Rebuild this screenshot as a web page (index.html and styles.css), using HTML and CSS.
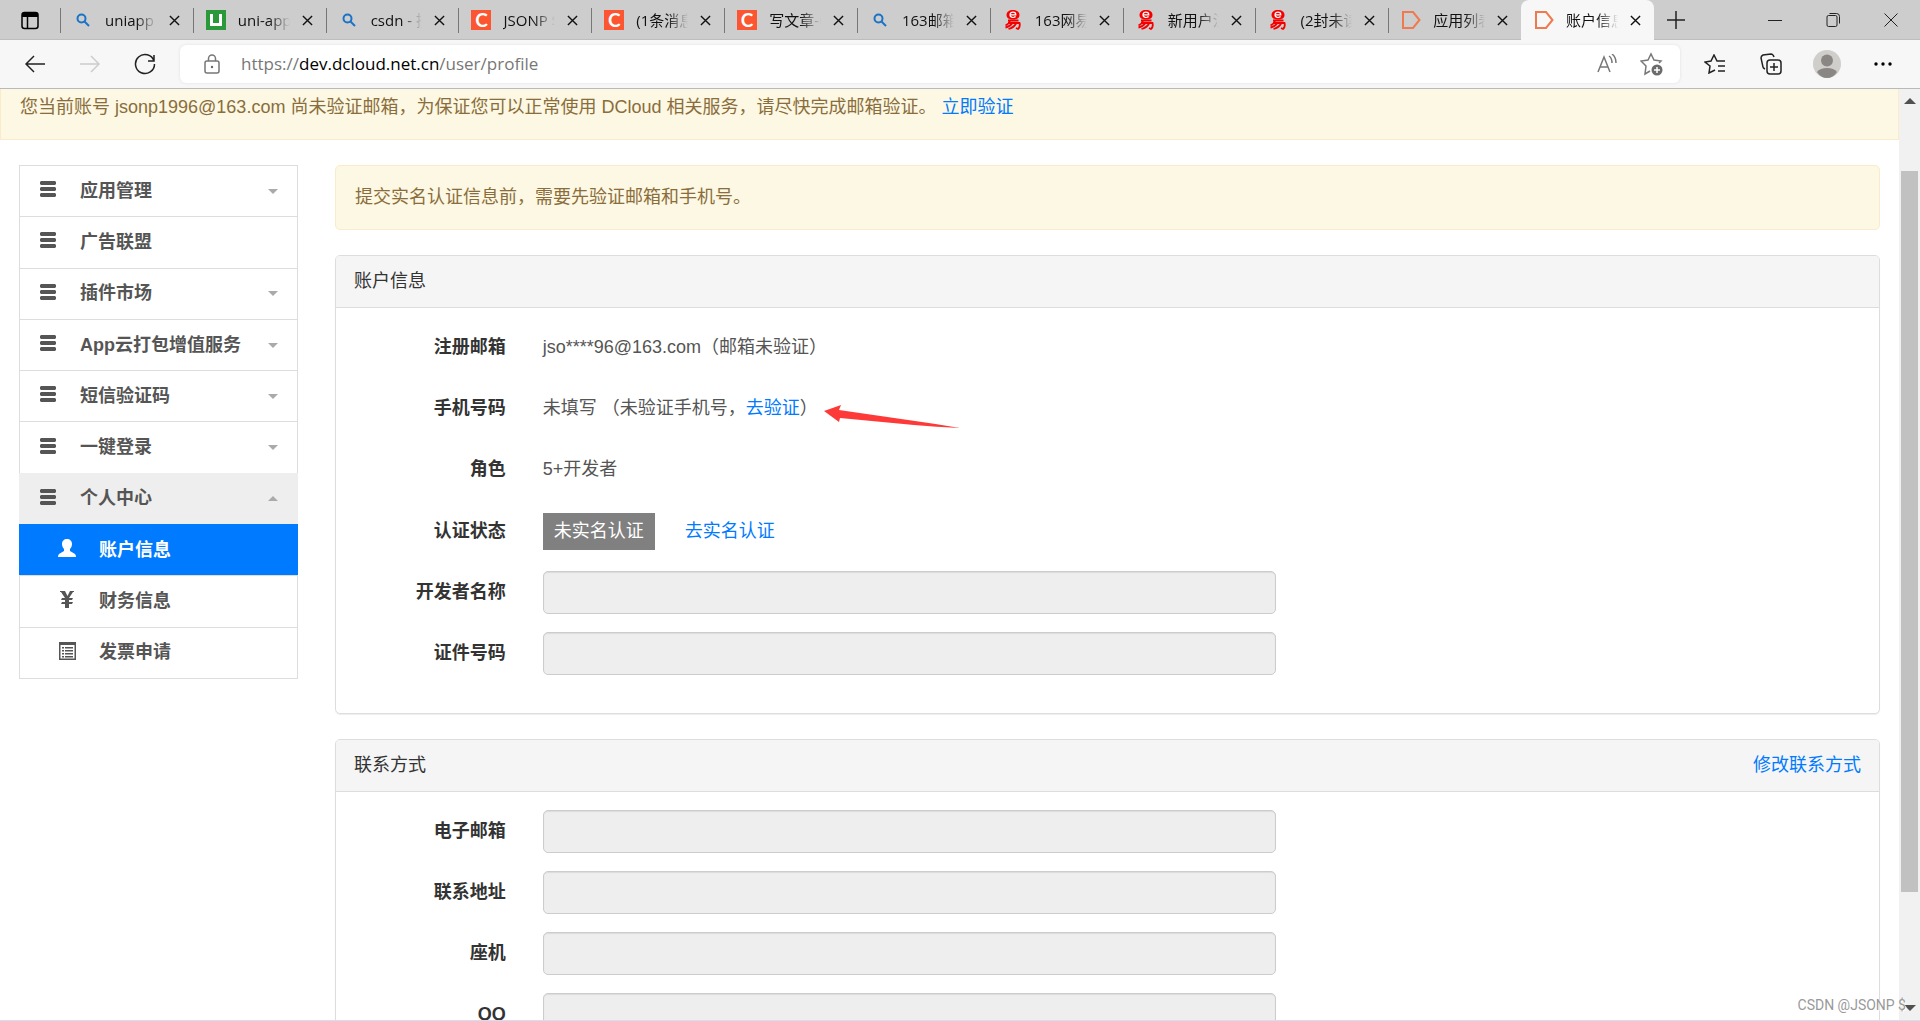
FILE: index.html
```html
<!DOCTYPE html>
<html lang="zh-CN">
<head>
<meta charset="utf-8">
<title>账户信息</title>
<link rel="stylesheet" href="styles.css">
</head>
<body>
<svg class="sprite" aria-hidden="true">
  <symbol id="x" viewBox="0 0 12 12"><path d="M1 1l10 10M11 1L1 11"/></symbol>
  <symbol id="search" viewBox="0 0 14 14"><circle cx="5.500" cy="5.500" r="4"/><path d="M8.500 8.500L13 13"/></symbol>
  <symbol id="bars" viewBox="0 0 16 16"><path d="M1 0h14l1 1v2l-1 1H1L0 3V1zM1 6h14l1 1v2l-1 1H1L0 9V7zM1 12h14l1 1v2l-1 1H1l-1-1v-2z"/></symbol>
  <symbol id="tag" viewBox="0 0 20 20"><path d="M2 2h10l6.500 8-6.500 8H2z"/></symbol>
  <symbol id="yi" viewBox="0 0 20 20"><path d="M10 0C6 0 3.500 2 3.500 5S6 9.500 10 9.500 16.500 8 16.500 5 14 0 10 0z" fill="#f50000"/><path d="M7.200 4.800h5.600C12.800 1.500 7 1.200 7 4.800c0 3.200 4 3.200 5.600 1.700" fill="none" stroke="#fff" stroke-width="1.200"/><path d="M5 10.500h10.500M2.500 15.500Q6 14 7 11M5 13h11.500q1 4-1.500 6l-2-1M9 13.500q-2 3-6.500 4M13 13.500q-2 4-7.500 5.500" fill="none" stroke="#f50000" stroke-width="1.800"/></symbol>
</svg>

<header class="tabbar">
  <button class="icon-btn tab-menu" aria-label="标签操作"><svg width="19" height="19" viewBox="0 0 19 19"><rect x="1" y="1.500" width="16" height="16" rx="2.500" fill="none" stroke="#000" stroke-width="1.500"/><path d="M1 3l2-2h12l2 2v3H1z"/><path d="M6.500 6v11" stroke="#000" stroke-width="1.500"/></svg></button>
  <nav class="tabs">
    <div class="tab"><svg class="fav search"><use href="#search"/></svg><a href="#" class="tab-title">uniapp - 搜索</a><button class="close" aria-label="关闭"><svg><use href="#x"/></svg></button></div>
    <div class="tab"><span class="fav fav-u"><i></i></span><a href="#" class="tab-title">uni-app官网</a><button class="close" aria-label="关闭"><svg><use href="#x"/></svg></button></div>
    <div class="tab"><svg class="fav search"><use href="#search"/></svg><a href="#" class="tab-title">csdn - 搜索</a><button class="close" aria-label="关闭"><svg><use href="#x"/></svg></button></div>
    <div class="tab"><span class="fav fav-c">C</span><a href="#" class="tab-title">JSONP $的博客</a><button class="close" aria-label="关闭"><svg><use href="#x"/></svg></button></div>
    <div class="tab"><span class="fav fav-c">C</span><a href="#" class="tab-title">(1条消息)</a><button class="close" aria-label="关闭"><svg><use href="#x"/></svg></button></div>
    <div class="tab"><span class="fav fav-c">C</span><a href="#" class="tab-title">写文章-CSDN</a><button class="close" aria-label="关闭"><svg><use href="#x"/></svg></button></div>
    <div class="tab"><svg class="fav search"><use href="#search"/></svg><a href="#" class="tab-title">163邮箱 - 搜索</a><button class="close" aria-label="关闭"><svg><use href="#x"/></svg></button></div>
    <div class="tab"><svg class="fav"><use href="#yi"/></svg><a href="#" class="tab-title">163网易邮箱</a><button class="close" aria-label="关闭"><svg><use href="#x"/></svg></button></div>
    <div class="tab"><svg class="fav"><use href="#yi"/></svg><a href="#" class="tab-title">新用户注册</a><button class="close" aria-label="关闭"><svg><use href="#x"/></svg></button></div>
    <div class="tab"><svg class="fav"><use href="#yi"/></svg><a href="#" class="tab-title">(2封未读)</a><button class="close" aria-label="关闭"><svg><use href="#x"/></svg></button></div>
    <div class="tab"><svg class="fav tag"><use href="#tag"/></svg><a href="#" class="tab-title">应用列表</a><button class="close" aria-label="关闭"><svg><use href="#x"/></svg></button></div>
    <div class="tab active"><svg class="fav tag"><use href="#tag"/></svg><a href="#" class="tab-title">账户信息</a><button class="close" aria-label="关闭"><svg><use href="#x"/></svg></button></div>
  </nav>
  <button class="icon-btn new-tab" aria-label="新建标签页"><svg width="18" height="18" viewBox="0 0 18 18"><path class="line" d="M9 0v18M0 9h18"/></svg></button>
  <div class="window-controls">
    <button class="icon-btn" aria-label="最小化"><svg width="14" height="14" viewBox="0 0 14 14"><path class="line thin" d="M0 7.500h14"/></svg></button>
    <button class="icon-btn" aria-label="还原"><svg width="14" height="14" viewBox="0 0 14 14"><path class="line thin" d="M2.500 2.500h7q1.500 0 1.500 1.500v8q0 1.500-1.500 1.500h-7Q1 13.500 1 12V4q0-1.500 1.500-1.500zM3.500.5h7q3 0 3 3v7"/></svg></button>
    <button class="icon-btn" aria-label="关闭窗口"><svg width="14" height="14" viewBox="0 0 14 14"><path class="line thin" d="M.5.5l13 13M13.500.5l-13 13"/></svg></button>
  </div>
</header>

<div class="toolbar">
  <div class="nav-buttons">
    <button class="icon-btn" aria-label="返回"><svg width="20" height="20" viewBox="0 0 20 20"><path class="line" d="M20 10H1M9 2l-8 8 8 8"/></svg></button>
    <button class="icon-btn faded" aria-label="前进"><svg width="20" height="20" viewBox="0 0 20 20"><path class="line" d="M0 10h19M11 2l8 8-8 8"/></svg></button>
    <button class="icon-btn" aria-label="刷新"><svg width="22" height="22" viewBox="0 0 22 22"><path class="line" d="M20 8a9.500 9.500 0 1 0 .5 3M20 2v6h-6"/></svg></button>
  </div>
  <div class="address">
    <svg class="lock" width="16" height="20" viewBox="0 0 16 20"><path class="line" d="M3 7h10q2 0 2 2v8q0 2-2 2H3q-2 0-2-2V9q0-2 2-2zM4.500 7V4.500a3.500 3.500 0 0 1 7 0V7"/><circle cx="8" cy="13" r="1.200" fill="#666"/></svg>
    <div class="url" role="textbox" contenteditable="true" spellcheck="false" aria-label="地址">https://<b>dev.dcloud.net.cn</b>/user/profile</div>
    <button class="icon-btn grey" aria-label="大声朗读"><svg width="20" height="20" viewBox="0 0 20 20"><path class="line" d="M1 18L7 3l6 15M3 13h8M12 2q3 2 3 7M15 0q4 3 4 9"/></svg></button>
    <button class="icon-btn grey" aria-label="收藏"><svg width="24" height="24" viewBox="0 0 24 24"><path class="line" d="M10 19l-5 3 1-8-5-5 7-1 3-6 3 6 7 1-2 2"/><circle cx="17" cy="18" r="5.500" fill="#6b6b6b"/><path d="M17 15v6M14 18h6" stroke="#fff" stroke-width="1.500"/></svg></button>
  </div>
  <div class="tools">
    <button class="icon-btn" aria-label="收藏夹"><svg width="22" height="20" viewBox="0 0 22 20"><path class="line" d="M11 16l-6 3 1-7-5-4 6-1 3-6 3 6h8M14 12h7M14 17h7"/></svg></button>
    <button class="icon-btn" aria-label="集锦"><svg width="22" height="22" viewBox="0 0 22 22"><path class="line" d="M10 7h8q3 0 3 3v8q0 3-3 3h-8q-3 0-3-3v-8q0-3 3-3zM14 10v8M10 14h8M5 16q-2-1-2-2L1 5q0-2 2-3l8-1q2 0 3 3"/></svg></button>
    <button class="icon-btn" aria-label="个人资料"><svg width="28" height="28" viewBox="0 0 28 28"><circle cx="14" cy="14" r="14" fill="#d0cecb"/><circle cx="14" cy="10.500" r="6" fill="#8a8683"/><path d="M4 22q3-4 10-4t10 4q-4 6-10 6T4 22z" fill="#8a8683"/></svg></button>
    <button class="icon-btn" aria-label="设置及其他"><svg width="18" height="4" viewBox="0 0 18 4"><circle cx="2" cy="2" r="1.700"/><circle cx="9" cy="2" r="1.700"/><circle cx="16" cy="2" r="1.700"/></svg></button>
  </div>
</div>

<div class="viewport">
  <div class="page">
    <div class="banner">您当前账号 jsonp1996@163.com 尚未验证邮箱，为保证您可以正常使用 DCloud 相关服务，请尽快完成邮箱验证。 <a href="#">立即验证</a></div>
    <div class="columns">
      <nav class="sidebar">
        <a href="#" class="item"><svg class="bars"><use href="#bars"/></svg>应用管理<i class="caret"></i></a>
        <a href="#" class="item"><svg class="bars"><use href="#bars"/></svg>广告联盟</a>
        <a href="#" class="item"><svg class="bars"><use href="#bars"/></svg>插件市场<i class="caret"></i></a>
        <a href="#" class="item"><svg class="bars"><use href="#bars"/></svg>App云打包增值服务<i class="caret"></i></a>
        <a href="#" class="item"><svg class="bars"><use href="#bars"/></svg>短信验证码<i class="caret"></i></a>
        <a href="#" class="item"><svg class="bars"><use href="#bars"/></svg>一键登录<i class="caret"></i></a>
        <a href="#" class="item open"><svg class="bars"><use href="#bars"/></svg>个人中心<i class="caret up"></i></a>
        <a href="#" class="item sub current"><svg viewBox="0 0 18 18"><path d="M9 0c3 0 5 2 5 5 0 2-1 4-2 5v2l5 3q1 1 1 3H0q0-2 1-3l5-3v-2C5 9 4 7 4 5c0-3 2-5 5-5z"/></svg>账户信息</a>
        <a href="#" class="item sub"><svg viewBox="0 0 18 18"><path d="M2 0h5l2.500 5L12 0h4v1h-1l-4 6h4l-1 2h-3v2h4l-1 2h-3v4H7v-4H3l1-2h3V9H3l1-2h3L3 1H2z"/></svg>财务信息</a>
        <a href="#" class="item sub"><svg viewBox="0 0 18 18"><path fill-rule="evenodd" d="M1 0h17v18H1zM2.500 3v13.500h14V3zM4 5h2v1.500H4zM7 5h8v1.500H7zM4 8h2v1.500H4zM7 8h8v1.500H7zM4 11h2v1.500H4zM7 11h8v1.500H7zM4 14h2v1.500H4zM7 14h8v1.500H7z"/></svg>发票申请</a>
      </nav>
      <main class="main">
        <div class="alert">提交实名认证信息前，需要先验证邮箱和手机号。</div>
        <section class="panel">
          <header class="panel-head"><span>账户信息</span></header>
          <div class="panel-body account">
            <div class="row"><b class="label">注册邮箱</b><div class="value">jso****96@163.com（邮箱未验证）</div></div>
            <div class="row"><b class="label">手机号码</b><div class="value">未填写 （未验证手机号，<a href="#">去验证</a>）<svg class="pointer" width="136" height="24" viewBox="0 0 136 24"><path d="M0 7L17 1l-2 5 76 11q22 3 45 7-24-1-46-3l-74-7-1 4z" fill="#fd3a38"/></svg></div></div>
            <div class="row"><b class="label">角色</b><div class="value">5+开发者</div></div>
            <div class="row status"><b class="label">认证状态</b><div class="value"><span class="badge">未实名认证</span><a href="#">去实名认证</a></div></div>
            <div class="row"><label class="label" for="dev">开发者名称</label><input id="dev" disabled></div>
            <div class="row"><label class="label" for="cert">证件号码</label><input id="cert" disabled></div>
          </div>
        </section>
        <section class="panel">
          <header class="panel-head"><span>联系方式</span><a href="#">修改联系方式</a></header>
          <div class="panel-body">
            <div class="row"><label class="label" for="mail">电子邮箱</label><input id="mail" disabled></div>
            <div class="row"><label class="label" for="addr">联系地址</label><input id="addr" disabled></div>
            <div class="row"><label class="label" for="tel">座机</label><input id="tel" disabled></div>
            <div class="row"><label class="label" for="qq">QQ</label><input id="qq" disabled></div>
          </div>
        </section>
      </main>
    </div>
  </div>
  <div class="scrollbar"><i class="arrow"></i><i class="thumb"></i><i class="arrow down"></i></div>
  <div class="watermark">CSDN @JSONP $</div>
</div>
</body>
</html>
```
FILE: styles.css
```css
* { box-sizing: border-box; }
body {
  margin: 0;
  height: 100vh;
  display: flex;
  flex-direction: column;
  overflow: hidden;
  background: #fff;
  color: #333;
  font: 18px/25px "Liberation Sans", "Noto Sans CJK SC", sans-serif;
}
a { color: #007aff; text-decoration: none; }
button { padding: 0; border: 0; background: none; }
.sprite { position: absolute; width: 0; height: 0; }
.icon-btn { display: flex; align-items: center; justify-content: center; flex: none; }
.line { fill: none; stroke: #222; stroke-width: 1.5; }
.thin { stroke-width: 1; }
.faded .line { stroke: #ccc; }
.grey .line, .lock .line { stroke: #777; }

.tabbar {
  display: flex;
  flex: none;
  height: 40px;
  background: #cdcdcd;
  box-shadow: inset 0 -1px #bdbdbd;
  font: 15px/20px "Open Sans", "Noto Sans CJK SC", sans-serif;
}
.tab-menu { width: 60px; }
.tabs { display: flex; flex: 1; min-width: 0; }
.tab {
  display: flex;
  flex: 1;
  align-items: center;
  min-width: 0;
  padding: 0 13px 0 13px;
  background: linear-gradient(#777, #777) 0 8px / 1px 25px no-repeat;
}
.tab.active { background: #f7f7f7; border-radius: 8px 8px 0 0; }
.fav { flex: none; width: 20px; height: 20px; margin-right: 12px; }
.search { width: 14px; height: 14px; margin: 0 15px 0 3px; fill: none; stroke: #1a73c8; stroke-width: 2; }
.tag { fill: none; stroke: #f07a50; stroke-width: 2; }
.fav-c { background: #fc5531; color: #fff; font: 700 19px/20px Lato, sans-serif; text-align: center; }
.fav-u { display: flex; align-items: center; justify-content: center; background: #2b9939; }
.fav-u i { width: 12px; height: 12px; border: 3px solid #fff; border-top: 0; }
.tab-title {
  flex: 1;
  overflow: hidden;
  white-space: nowrap;
  color: #111;
  mask-image: linear-gradient(90deg, #000 60%, transparent);
}
.close { display: flex; margin-left: 12px; }
.close svg { width: 11px; height: 11px; fill: none; stroke: #111; stroke-width: 1.5; }
.new-tab { width: 44px; }
.window-controls { display: flex; margin-left: 48px; }
.window-controls .icon-btn { width: 58px; }

.toolbar {
  display: flex;
  flex: none;
  height: 49px;
  padding: 5px 7px;
  background: #f7f7f7;
  border-bottom: 1px solid #b8b9bd;
}
.nav-buttons { display: flex; width: 173px; }
.nav-buttons .icon-btn { width: 55px; }
.address {
  display: flex;
  flex: 1;
  align-items: center;
  padding: 0 6px 0 24px;
  background: #fff;
  border-radius: 6px;
  box-shadow: 0 0 3px #ddd;
}
.address .icon-btn { width: 45px; }
.url { flex: 1; margin-left: 21px; color: #777; font: 17px/24px "Open Sans", sans-serif; }
.url b { color: #000; font-weight: 400; }
.tools { display: flex; width: 233px; padding-left: 7px; }
.tools .icon-btn { width: 56px; }

.viewport {
  position: relative;
  display: flex;
  flex: 1;
  min-height: 0;
  overflow: hidden;
  border-bottom: 1px solid #d3dfee;
}
.page { flex: 1; min-width: 0; }
.banner {
  padding: 6px 19px 19px;
  background: #fcf8e3;
  border: 1px solid #faebcc;
  border-top: 0;
  color: #8a6d3b;
}
.columns { display: flex; gap: 37px; padding: 25px 19px 0; }
.sidebar {
  display: grid;
  grid-auto-rows: 1fr;
  flex: none;
  align-self: flex-start;
  width: 279px;
  min-height: 514px;
  border-bottom: 1px solid #ddd;
}
.item {
  display: flex;
  align-items: center;
  padding: 0 19px 0 20px;
  border: 1px solid #ddd;
  border-bottom: 0;
  color: #555;
  font-weight: 700;
}
.item svg { flex: none; width: 18px; height: 18px; margin-right: 23px; margin-bottom: 4px; fill: currentColor; }
.item .bars { width: 16px; height: 16px; margin-right: 24px; }
.item.sub { padding-left: 38px; }
.open { background: #eee; border-color: #eee; }
.current { background: #007aff; border-color: #007aff; color: #fff; }
.caret { margin-left: auto; border: 5px solid transparent; border-top-color: #aaa; border-bottom: 0; }
.up { transform: rotate(180deg); }

.main { flex: 1; min-width: 0; }
.alert {
  padding: 19px;
  background: #fcf8e3;
  border: 1px solid #faebcc;
  border-radius: 5px;
  color: #8a6d3b;
}
.panel { margin-top: 25px; border: 1px solid #ddd; border-radius: 5px; box-shadow: 0 1px 1px #eee; }
.panel-head {
  display: flex;
  justify-content: space-between;
  padding: 13px 18px;
  background: #f5f5f5;
  border-bottom: 1px solid #ddd;
  border-radius: 4px 4px 0 0;
}
.panel-body { display: grid; gap: 18px; padding: 18px 0; }
.account { padding-bottom: 38px; }
.row {
  display: grid;
  grid-template-columns: 11% 733fr 566fr;
  column-gap: 37px;
  align-items: center;
  min-height: 43px;
}
.label { text-align: right; font-weight: 700; }
.value { position: relative; color: #555; }
.status { min-height: 44px; }
.badge { display: inline-block; margin-right: 30px; padding: 6px 11px; background: #808080; color: #fff; }
input {
  width: 100%;
  height: 43px;
  border: 1px solid #ccc;
  border-radius: 5px;
  background: #eee;
  box-shadow: inset 0 1px 1px rgba(0, 0, 0, .08);
}
.pointer { position: absolute; left: 281px; top: 8px; }

.scrollbar {
  display: flex;
  flex: none;
  flex-direction: column;
  align-items: center;
  width: 21px;
  padding: 9px 0;
  background: #f1f1f1;
}
.arrow { border: 6px solid transparent; border-bottom-color: #505050; border-top: 0; }
.down { transform: rotate(180deg); margin-top: auto; }
.thumb { width: 17px; height: 79%; margin-top: 67px; background: #c1c1c1; }
.watermark {
  position: absolute;
  right: 14px;
  bottom: 5px;
  color: #999;
  font: 14px/20px Roboto, sans-serif;
  text-shadow: 1px 1px #fff;
}
```
